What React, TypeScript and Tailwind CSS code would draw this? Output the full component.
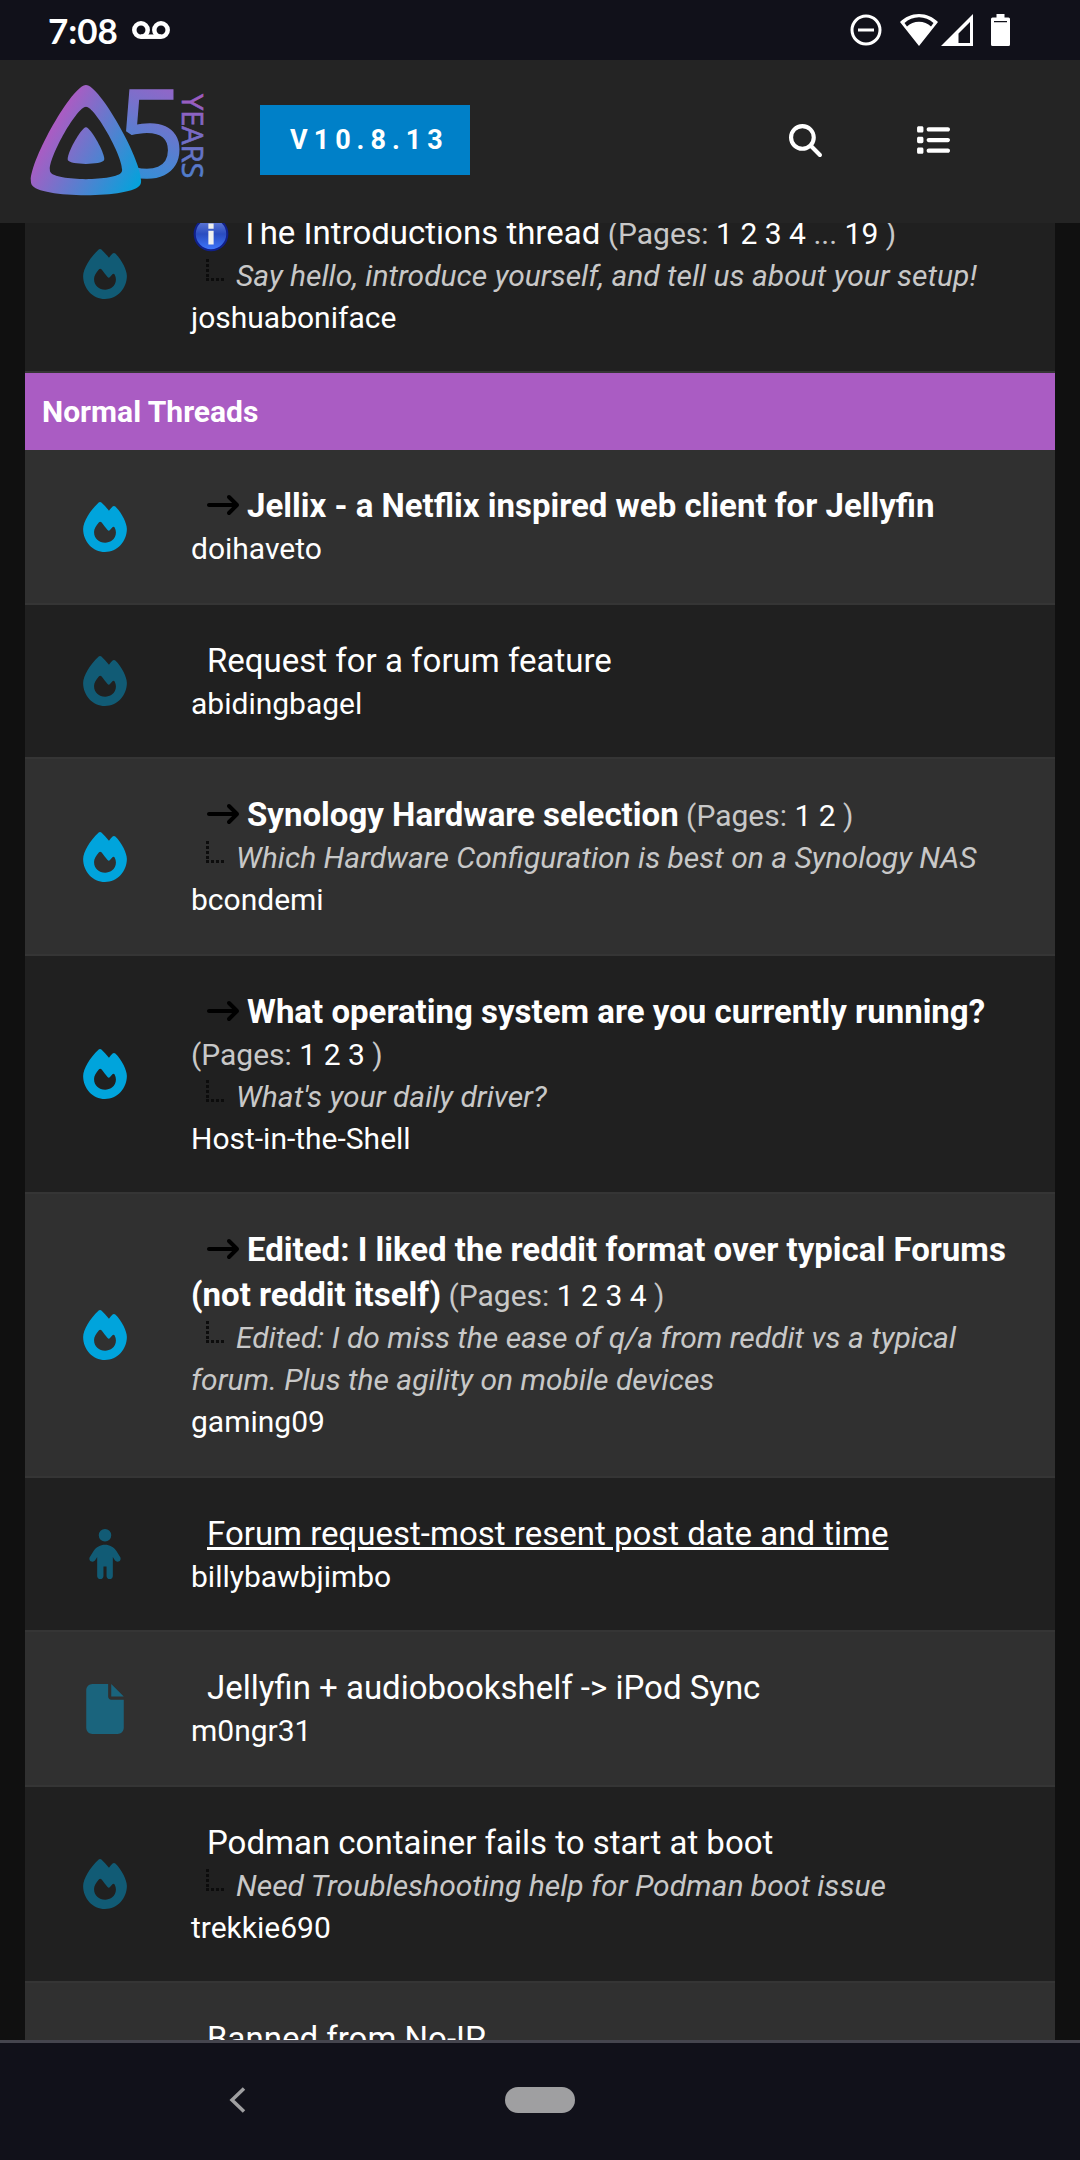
import React from "react";
import {
  FaArrowRightLong,
  FaChild,
  FaFile,
  FaFire,
  FaList,
  FaMagnifyingGlass,
} from "react-icons/fa6";

type Thread = {
  title: string;
  author: string;
  icon: "fire" | "child" | "file";
  unread?: boolean;
  info?: boolean;
  underline?: boolean;
  pages?: string[];
  description?: string;
};

const stickyThreads: Thread[] = [
  {
    title: "The Introductions thread",
    author: "joshuaboniface",
    icon: "fire",
    info: true,
    pages: ["1", "2", "3", "4", "...", "19"],
    description: "Say hello, introduce yourself, and tell us about your setup!",
  },
];

const normalThreads: Thread[] = [
  {
    title: "Jellix - a Netflix inspired web client for Jellyfin",
    author: "doihaveto",
    icon: "fire",
    unread: true,
  },
  { title: "Request for a forum feature", author: "abidingbagel", icon: "fire" },
  {
    title: "Synology Hardware selection",
    author: "bcondemi",
    icon: "fire",
    unread: true,
    pages: ["1", "2"],
    description: "Which Hardware Configuration is best on a Synology NAS",
  },
  {
    title: "What operating system are you currently running?",
    author: "Host-in-the-Shell",
    icon: "fire",
    unread: true,
    pages: ["1", "2", "3"],
    description: "What's your daily driver?",
  },
  {
    title: "Edited: I liked the reddit format over typical Forums (not reddit itself)",
    author: "gaming09",
    icon: "fire",
    unread: true,
    pages: ["1", "2", "3", "4"],
    description:
      "Edited: I do miss the ease of q/a from reddit vs a typical forum. Plus the agility on mobile devices",
  },
  {
    title: "Forum request-most resent post date and time",
    author: "billybawbjimbo",
    icon: "child",
    underline: true,
  },
  { title: "Jellyfin + audiobookshelf -> iPod Sync", author: "m0ngr31", icon: "file" },
  {
    title: "Podman container fails to start at boot",
    author: "trekkie690",
    icon: "fire",
    description: "Need Troubleshooting help for Podman boot issue",
  },
  { title: "Banned from No-IP", author: "\u00a0", icon: "fire", description: "\u00a0" },
];

const icons = { fire: FaFire, child: FaChild, file: FaFile };

function StatusBar() {
  return (
    <div className="flex h-[60px] shrink-0 items-center bg-[#11111a] pl-12 pr-[70px] text-white">
      <span className="font-['Lato',sans-serif] text-[35px] font-bold leading-[60px]">7:08</span>
      <svg className="ml-[14px] h-[18px] w-[38px]" viewBox="0 0 38 18" fill="none" stroke="currentColor" strokeWidth="4.500">
        <circle cx="9" cy="9" r="6.700" />
        <circle cx="29" cy="9" r="6.700" />
        <path d="M9 15.700H29" />
      </svg>
      <svg className="ml-auto h-8 w-8" viewBox="0 0 32 32" fill="none" stroke="currentColor" strokeWidth="3">
        <circle cx="16" cy="16" r="14" />
        <path d="M8 16H24" />
      </svg>
      <svg className="ml-[18px] h-8 w-[38px]" viewBox="0 0 38 32" fill="currentColor">
        <path
          fillRule="evenodd"
          d="M19 0C11.500 0 5 3 0 8L19 32L38 8C33 3 26.500 0 19 0ZM4.500 9C8.500 5.300 13.500 3.200 19 3.200S29.500 5.300 33.500 9L31 12.400C28 9.500 23.500 7.800 19 7.800S10 9.500 7 12.400Z"
        />
      </svg>
      <svg className="ml-[3px] h-8 w-8" viewBox="0 0 32 32" fill="currentColor">
        <path fillRule="evenodd" d="M32 0V32H0ZM29 8L17.500 19.500V29H29Z" />
      </svg>
      <svg className="ml-[18px] h-8 w-[19px]" viewBox="0 0 19 32" fill="currentColor">
        <path
          fillRule="evenodd"
          d="M5.500 0H13.500V3.500H17.500Q19 3.500 19 5V30.500Q19 32 17.500 32H1.500Q0 32 0 30.500V5Q0 3.500 1.500 3.500H5.500ZM3 7V8.200H16V7Z"
        />
      </svg>
    </div>
  );
}

function Logo() {
  return (
    <svg className="h-[114px] w-[180px]" viewBox="0 0 180 114" role="img" aria-label="Jellyfin 5 years">
      <defs>
        <linearGradient id="mark" gradientUnits="userSpaceOnUse" x1="110" y1="213" x2="496" y2="436">
          <stop offset="0" stopColor="#aa5cc3" />
          <stop offset="1" stopColor="#00a4dc" />
        </linearGradient>
        <linearGradient id="five" gradientUnits="userSpaceOnUse" x1="150" y1="0" x2="105" y2="105">
          <stop offset="0" stopColor="#9a62c6" />
          <stop offset="1" stopColor="#2a93d8" />
        </linearGradient>
        <linearGradient id="years" gradientUnits="userSpaceOnUse" x1="0" y1="0" x2="88" y2="0">
          <stop offset="0" stopColor="#a05ac0" />
          <stop offset="1" stopColor="#4a80cc" />
        </linearGradient>
      </defs>
      <text
        x="87"
        y="94"
        fontSize="120"
        fontFamily="Open Sans, sans-serif"
        fill="url(#five)"
        stroke="url(#five)"
        strokeWidth="1.500"
      >
        5
      </text>
      <g transform="translate(-4.700 -3.500) scale(.237)" fill="url(#mark)">
        <path d="M256 201.620c-20.440 0-86.230 119.290-76.200 139.430s142.480 19.920 152.400 0-55.760-139.420-76.200-139.430z" />
        <path d="M256 23.300c-61.560 0-259.820 359.430-229.600 420.100s429.300 60 459.200 0S317.560 23.320 256 23.300zm150.510 367.500c-19.590 39.330-281.080 39.770-300.900 0S215.710 115.480 256.060 115.480 426.100 351.420 406.510 390.800z" />
      </g>
      <text
        transform="translate(152 11) rotate(90)"
        fontSize="29"
        fontFamily="Open Sans, sans-serif"
        fill="url(#years)"
        stroke="url(#years)"
        strokeWidth=".6"
      >
        YEARS
      </text>
    </svg>
  );
}

function Header() {
  return (
    <header className="flex h-[163px] shrink-0 items-center bg-[#242424] pb-[3px] pl-[30px] pr-[130px] text-white">
      <a href="#home">
        <Logo />
      </a>
      <a
        href="#release"
        className="ml-[50px] bg-[#0080c8] pl-[30px] pr-[21px] text-[27px] font-bold leading-[70px] tracking-[6px]"
      >
        V10.8.13
      </a>
      <button type="button" aria-label="Search" className="ml-auto">
        <FaMagnifyingGlass className="size-[33px]" />
      </button>
      <button type="button" aria-label="Menu" className="ml-[94px]">
        <FaList className="size-[34px]" />
      </button>
    </header>
  );
}

function InfoIcon() {
  return (
    <svg className="mr-[9px] inline size-10 align-[-10px]" viewBox="0 0 38 38">
      <defs>
        <linearGradient id="ball" x1="0" y1="0" x2="0" y2="1">
          <stop offset="0" stopColor="#6f86dc" />
          <stop offset=".5" stopColor="#2a4cc0" />
          <stop offset="1" stopColor="#3f78ff" />
        </linearGradient>
      </defs>
      <circle cx="19" cy="19" r="15.500" fill="url(#ball)" stroke="#10208a" strokeWidth="2" />
      <path d="M16.500 9h5v5h-5zM16.500 16h5v13h-5z" fill="#f0f0ee" />
    </svg>
  );
}

function Branch() {
  return (
    <svg className="ml-[14px] mr-[5px] inline h-6 w-[26px] align-[4px]" viewBox="0 0 26 24">
      <path d="M2.500 1V22.500" stroke="#0c0c0c" strokeWidth="3" strokeDasharray="3 2" />
      <path d="M1 21.500H20" stroke="#0c0c0c" strokeWidth="3" strokeDasharray="3 2" />
    </svg>
  );
}

function ThreadRow({ thread, stripe }: { thread: Thread; stripe: boolean }) {
  const Icon = icons[thread.icon];
  return (
    <tr className={"border-b-2 border-[#353535] " + (stripe ? "bg-[#303030]" : "bg-[#202020]")}>
      <td className="w-[166px] pr-[6px]">
        <Icon className={"mx-auto size-[50px] text-[#00a4dc] " + (thread.unread ? "" : "opacity-45")} />
      </td>
      <td className={"pr-10 pt-[33px] align-top " + (stripe ? "pb-[33px]" : "pb-8")}>
        <div>
          {thread.info ? <InfoIcon /> : <span className="inline-block w-4" />}
          {thread.unread && <FaArrowRightLong className="mr-2 inline size-8 align-[-4px] text-black" />}
          <a
            href="#thread"
            className={
              "text-[33px] leading-[45px] text-white " +
              (thread.unread ? "font-bold " : "") +
              (thread.underline ? "underline" : "")
            }
          >
            {thread.title}
          </a>
          {thread.pages && (
            <span>
              {" "}
              (Pages:{" "}
              {thread.pages.map((page) =>
                page === "..." ? (
                  "... "
                ) : (
                  <React.Fragment key={page}>
                    <a href="#page" className="text-white">
                      {page}
                    </a>{" "}
                  </React.Fragment>
                )
              )}
              )
            </span>
          )}
        </div>
        {thread.description && (
          <div className="italic">
            <Branch />
            {thread.description}
          </div>
        )}
        <a href="#user" className="block text-white">
          {thread.author}
        </a>
      </td>
    </tr>
  );
}

function NavigationBar() {
  return (
    <nav className="grid h-[120px] shrink-0 grid-cols-[1fr_auto_1fr] items-center border-t-[3px] border-[#45454e] bg-[#11111a] pb-1 text-[#9f9fa1]">
      <button type="button" aria-label="Back" className="ml-[228px] justify-self-start">
        <svg className="h-[26px] w-[18px]" viewBox="0 0 18 26" fill="none" stroke="currentColor" strokeWidth="3.500">
          <path d="M16 1.500L4 13L16 24.500" />
        </svg>
      </button>
      <button type="button" aria-label="Home" className="h-[26px] w-[70px] rounded-full bg-[#9f9fa1]" />
    </nav>
  );
}

export default function App() {
  return (
    <div className="flex h-screen flex-col bg-[#101010] font-['Roboto',sans-serif] text-[30px] leading-[42px] text-[#c8c8c8]">
      <StatusBar />
      <Header />
      <main className="min-h-0 flex-1 overflow-hidden px-[25px]">
        <table className="-mt-[46px] w-full border-collapse text-left">
          <tbody>
            {stickyThreads.map((thread) => (
              <ThreadRow key={thread.title} thread={thread} stripe={false} />
            ))}
          </tbody>
          <tbody>
            <tr>
              <th colSpan={2} className="h-[78px] bg-[#aa5cc3] px-[17px] font-bold text-white">
                Normal Threads
              </th>
            </tr>
          </tbody>
          <tbody>
            {normalThreads.map((thread, index) => (
              <ThreadRow key={thread.title} thread={thread} stripe={index % 2 === 0} />
            ))}
          </tbody>
        </table>
      </main>
      <NavigationBar />
    </div>
  );
}
